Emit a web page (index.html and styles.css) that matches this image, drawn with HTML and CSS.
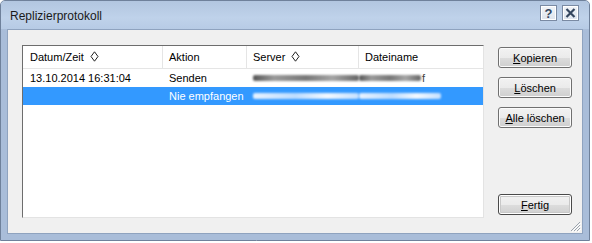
FILE: index.html
```html
<!DOCTYPE html>
<html lang="de">
<head>
  <meta charset="UTF-8">
  <title>Replizierprotokoll</title>
  <link rel="stylesheet" href="styles.css">
</head>
<body>
  <div class="window">
    <div class="titlebar">
      <span class="title">Replizierprotokoll</span>
      <div class="caption-buttons">
        <span class="cap-btn help">?</span>
        <span class="cap-btn close">
          <svg width="11" height="10" viewBox="0 0 11 10">
            <path d="M1.5 1 L9.5 9 M9.5 1 L1.5 9" stroke="#34465f" stroke-width="2.2" fill="none"/>
          </svg>
        </span>
      </div>
    </div>

    <div class="client">
      <div class="list">
        <div class="list-head">
          <div class="col c1">Datum/Zeit
            <svg class="sort" width="9" height="11" viewBox="0 0 9 11">
              <path d="M4.5 0.8 L8 5.5 L4.5 10.2 L1 5.5 Z" fill="none" stroke="#222" stroke-width="1"/>
            </svg>
          </div>
          <div class="col c2">Aktion</div>
          <div class="col c3">Server
            <svg class="sort" width="9" height="11" viewBox="0 0 9 11">
              <path d="M4.5 0.8 L8 5.5 L4.5 10.2 L1 5.5 Z" fill="none" stroke="#222" stroke-width="1"/>
            </svg>
          </div>
          <div class="col c4">Dateiname</div>
        </div>
        <div class="row">
          <div class="cell c1">13.10.2014 16:31:04</div>
          <div class="cell c2">Senden</div>
          <div class="cell c3"><span class="smear smear-server"></span></div>
          <div class="cell c4"><span class="smear smear-file"></span><span class="tail">f</span></div>
        </div>
        <div class="row selected">
          <div class="cell c1"></div>
          <div class="cell c2">Nie empfangen</div>
          <div class="cell c3"><span class="smear smear-server light"></span></div>
          <div class="cell c4"><span class="smear smear-file light wide"></span></div>
        </div>
      </div>

      <div class="actions">
        <button class="btn"><u>K</u>opieren</button>
        <button class="btn"><u>L</u>öschen</button>
        <button class="btn"><u>A</u>lle löschen</button>
        <button class="btn default"><u>F</u>ertig</button>
      </div>

      <svg class="grip" width="12" height="12" viewBox="0 0 12 12">
        <path d="M11 2 L2 11 M11 5 L5 11 M11 8 L8 11" stroke="#9aa3ad" stroke-width="1"/>
        <path d="M12 3 L3 12 M12 6 L6 12 M12 9 L9 12" stroke="#ffffff" stroke-width="1"/>
      </svg>
    </div>
  </div>
</body>
</html>
```

FILE: styles.css
```css
* {
  margin: 0;
  padding: 0;
  box-sizing: border-box;
}

body {
  width: 592px;
  height: 243px;
  background-color: #ffffff;
  font-family: "Liberation Sans", Arial, sans-serif;
  overflow: hidden;
}

.window {
  display: flex;
  flex-direction: column;
  width: 590px;
  height: 241px;
  padding: 0 6px 6px 6px;
  background: linear-gradient(#b4c7e0, #a9bdd9 30px, #a9bdd9);
  border: 1px solid #6f819b;
  border-radius: 5px 5px 0 0;
}

.titlebar {
  display: flex;
  align-items: center;
  justify-content: space-between;
  height: 28px;
  margin: 0 -6px;
  padding-left: 9px;
  padding-right: 10px;
  background: linear-gradient(#b2c6e0, #bfd2ea 60%, #b7cbe5);
  border-radius: 4px 4px 0 0;
}

.title {
  font-size: 12px;
  color: #1a1a1a;
  padding-top: 1px;
}

.caption-buttons {
  display: flex;
  gap: 5px;
  margin-top: -4px;
}

.cap-btn {
  display: flex;
  align-items: center;
  justify-content: center;
  width: 17px;
  height: 16px;
  border: 1px solid #7a8aa3;
  background: linear-gradient(#f1f4f8, #dde4ee);
  box-shadow: inset 0 0 0 1px #ffffff;
}

.cap-btn.help {
  font-size: 13px;
  font-weight: 700;
  color: #34465f;
  line-height: 1;
}

.client {
  position: relative;
  flex: 1;
  display: flex;
  gap: 14px;
  padding: 15px 10px 15px 14px;
  background-color: #f0f0f0;
  border: 1px solid #8fa3bf;
}

.list {
  width: 463px;
  background-color: #ffffff;
  border-top: 1px solid #6d6d6d;
  border-left: 1px solid #6d6d6d;
  border-right: 1px solid #e3e3e3;
  border-bottom: 1px solid #e3e3e3;
  font-size: 11px;
  color: #000000;
}

.list-head,
.row {
  display: grid;
  grid-template-columns: 140px 84px 112px 1fr;
}

.list-head {
  height: 23px;
  border-bottom: 1px solid #e5e5e5;
}

.col {
  display: flex;
  align-items: center;
  gap: 6px;
  padding-left: 6px;
  border-right: 1px solid #e5e5e5;
}

.col.c1,
.cell.c1 {
  padding-left: 7px;
}

.col.c4 {
  border-right: 0;
}

.sort {
  margin-top: -2px;
}

.row {
  height: 18px;
  align-items: center;
}

.row.selected {
  background-color: #3399ff;
  color: #ffffff;
}

.cell {
  display: flex;
  align-items: center;
  padding-left: 6px;
  white-space: nowrap;
}

.smear {
  display: inline-block;
  height: 6px;
  background: linear-gradient(90deg, #555 0%, #9a9a9a 20%, #777 50%, #a5a5a5 75%, #666 100%);
  filter: blur(1px);
  border-radius: 2px;
}

.smear-server {
  width: 106px;
}

.smear-file {
  width: 62px;
  margin-left: -6px;
}

.smear.light {
  background: linear-gradient(90deg, #e8f2ff, #bcdcff 40%, #f2f8ff 70%, #c4e0ff);
}

.smear.wide {
  width: 82px;
}

.tail {
  color: #444;
  margin-left: 1px;
}

.actions {
  display: flex;
  flex-direction: column;
  gap: 9px;
  width: 74px;
  padding-top: 2px;
  padding-bottom: 3px;
}

.btn {
  height: 21px;
  font-family: "Liberation Sans", Arial, sans-serif;
  font-size: 11px;
  color: #000000;
  border: 1px solid #707070;
  border-radius: 3px;
  background: linear-gradient(#f2f2f2 0%, #ebebeb 50%, #dddddd 51%, #cfcfcf 100%);
  box-shadow: inset 0 0 0 1px #fbfbfb;
}

.btn.default {
  margin-top: auto;
  border-color: #4a4a4a;
  box-shadow: inset 0 0 0 1px #ffffff, inset 0 0 0 2px #c8c8c8;
}

.grip {
  position: absolute;
  right: 1px;
  bottom: 1px;
}
```
